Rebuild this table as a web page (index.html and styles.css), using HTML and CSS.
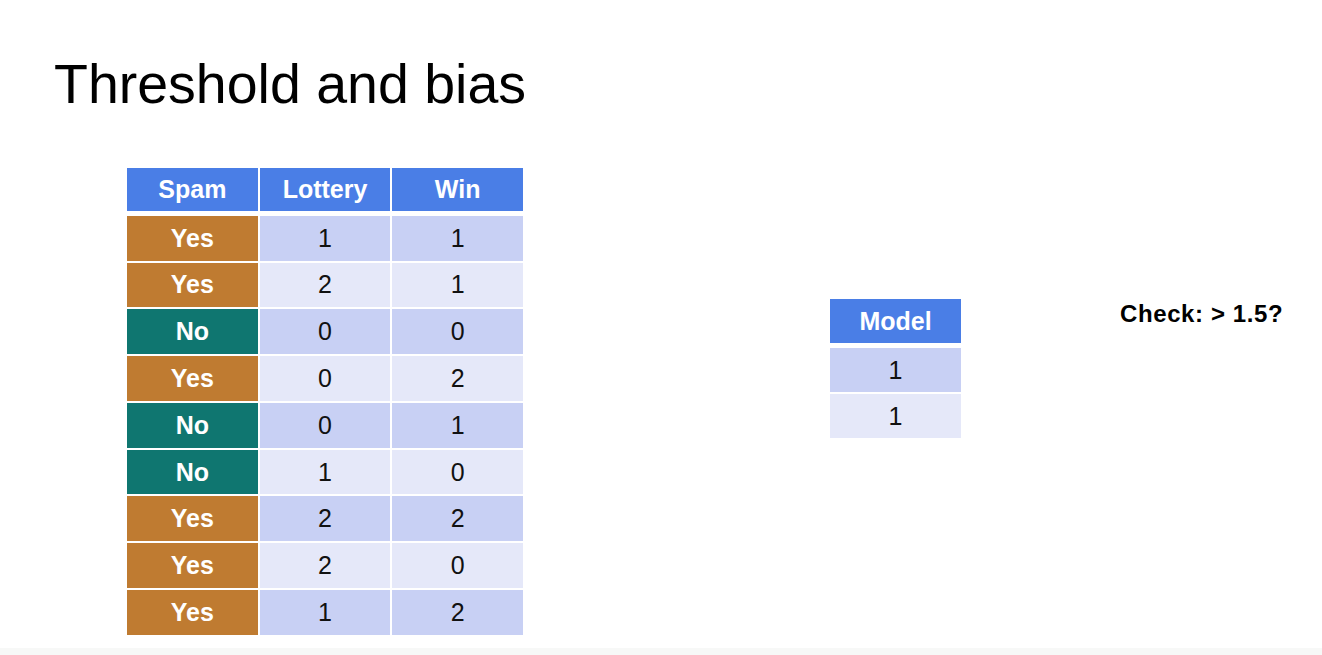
FILE: index.html
```html
<!DOCTYPE html>
<html>
<head>
<meta charset="utf-8">
<link rel="stylesheet" href="styles.css">
</head>
<body>
<div class="slide">
  <h1 class="title">Threshold and bias</h1>
  <div class="content">
    <div class="table main">
      <div class="hd">Spam</div><div class="hd">Lottery</div><div class="hd">Win</div>
      <div class="sp yes">Yes</div><div class="c odd">1</div><div class="c odd">1</div>
      <div class="sp yes">Yes</div><div class="c even">2</div><div class="c even">1</div>
      <div class="sp no">No</div><div class="c odd">0</div><div class="c odd">0</div>
      <div class="sp yes">Yes</div><div class="c even">0</div><div class="c even">2</div>
      <div class="sp no">No</div><div class="c odd">0</div><div class="c odd">1</div>
      <div class="sp no">No</div><div class="c even">1</div><div class="c even">0</div>
      <div class="sp yes">Yes</div><div class="c odd">2</div><div class="c odd">2</div>
      <div class="sp yes">Yes</div><div class="c even">2</div><div class="c even">0</div>
      <div class="sp yes">Yes</div><div class="c odd">1</div><div class="c odd">2</div>
    </div>
    <div class="table model">
      <div class="hd">Model</div>
      <div class="c odd">1</div>
      <div class="c even">1</div>
    </div>
    <div class="check">Check: &gt; 1.5?</div>
  </div>
  <div class="footer"></div>
</div>
</body>
</html>
```

FILE: styles.css
```css
html, body {
  margin: 0;
  padding: 0;
  background: #ffffff;
}
body {
  font-family: "Liberation Sans", Arial, sans-serif;
  color: #000;
}
.slide {
  width: 1322px;
  height: 655px;
  position: relative;
  overflow: hidden;
  display: flex;
  flex-direction: column;
}
.title {
  margin: 0;
  padding: 57px 0 0 54px;
  font-size: 55.5px;
  font-weight: normal;
  line-height: 55px;
  height: 55px;
  color: #000;
}
.content {
  display: flex;
  align-items: flex-start;
  margin-top: 56px;
}
.table {
  display: grid;
  column-gap: 2px;
  row-gap: 2px;
  font-size: 25px;
}
.table > div {
  display: flex;
  align-items: center;
  justify-content: center;
}
.main {
  margin-left: 127px;
  width: 396px;
  grid-template-columns: 1fr 1fr 1fr;
  grid-template-rows: 46px 44.5px repeat(8, 44.8px);
}
.hd {
  background: #4a7ee6;
  color: #fff;
  font-weight: bold;
}
.main .hd {
  height: 43px;
  align-self: start;
}
.sp {
  color: #fff;
  font-weight: bold;
}
.yes { background: #bf7b31; }
.no { background: #0f7670; }
.c { color: #111; }
.odd { background: #c8d0f4; }
.even { background: #e5e8f9; }
.model {
  margin-left: 307px;
  margin-top: 131px;
  width: 131px;
  grid-template-columns: 1fr;
  grid-template-rows: 47px 44px 44px;
}
.model .hd {
  height: 44px;
  align-self: start;
}
.check {
  margin-left: 159px;
  margin-top: 131px;
  font-size: 24px;
  letter-spacing: 0.6px;
  font-weight: bold;
  line-height: 30px;
}
.footer {
  position: absolute;
  left: 0;
  right: 0;
  bottom: 0;
  height: 7px;
  background: #f7f8f7;
}
```
